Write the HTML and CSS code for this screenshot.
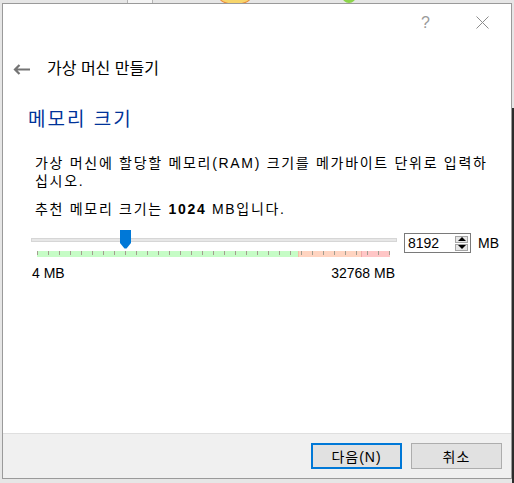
FILE: index.html
```html
<!DOCTYPE html>
<html>
<head>
    <title>가상 머신 만들기</title>
    <link rel="stylesheet" href="styles.css">
</head>
<body>

    <!-- bits of the desktop peeking out behind the dialog -->
    <div class="desktop">
        <span class="desk-item desk-box"></span>
        <span class="desk-item desk-sun"></span>
        <span class="desk-item desk-leaf"></span>
        <span class="desk-item desk-dark"></span>
    </div>

    <div class="window">
        <div class="titlebar">
            <span class="help">?</span>
            <svg class="close" width="13" height="13" viewBox="0 0 13 13">
                <path d="M0.5 0.5 L12.5 12.5 M12.5 0.5 L0.5 12.5" stroke="#8c8c8c" stroke-width="1" fill="none"/>
            </svg>
        </div>

        <div class="wizard-head">
            <svg class="back" width="17" height="11" viewBox="0 0 17 11">
                <path d="M17 5.5 H2 M6.5 1 L2 5.5 L6.5 10" stroke="#747474" stroke-width="2.2" fill="none"/>
            </svg>
            <span class="wizard-title">가상 머신 만들기</span>
        </div>

        <div class="page">
            <h2 class="page-title">메모리 크기</h2>
            <p class="desc">가상 머신에 할당할 메모리(RAM) 크기를 메가바이트 단위로 입력하<br>십시오.</p>
            <p class="desc desc-tight">추천 메모리 크기는 <b>1024</b> MB입니다.</p>

            <div class="mem-row">
                <div class="slider-wrap">
                    <div class="slider">
                        <div class="track"></div>
                        <svg class="thumb" width="11" height="19" viewBox="0 0 11 19">
                            <path d="M0 0 H11 V13 L6.5 18.5 H4.5 L0 13 Z" fill="#0078d7"/>
                        </svg>
                    </div>
                    <div class="scale">
                        <span class="zone zone-ok"></span>
                        <span class="zone zone-warn"></span>
                        <span class="zone zone-bad"></span>
                    </div>
                    <div class="scale-labels">
                        <span>4 MB</span>
                        <span>32768 MB</span>
                    </div>
                </div>

                <div class="spin">
                    <span class="spin-value">8192</span>
                    <div class="spin-buttons">
                        <span class="spin-btn"><i class="arrow-up"></i></span>
                        <span class="spin-btn"><i class="arrow-down"></i></span>
                    </div>
                </div>
                <span class="unit">MB</span>
            </div>
        </div>

        <div class="footer">
            <button class="btn btn-default">다음(N)</button>
            <button class="btn">취소</button>
        </div>
    </div>

</body>
</html>
```

FILE: styles.css
```css
body {
    margin: 0;
    padding: 0;
    width: 514px;
    height: 483px;
    overflow: hidden;
    position: relative;
    background-color: #e6e6e6;
    font-family: "Liberation Sans", "Noto Sans CJK KR", sans-serif;
    color: #000;
}

/* desktop remnants */
.desk-item {
    position: absolute;
    display: block;
}

.desk-box {
    left: 127px;
    top: -6px;
    width: 24px;
    height: 8px;
    border: 1px solid #b5b5b5;
    background-color: #f4f4f4;
}

.desk-sun {
    left: 218px;
    top: -14px;
    width: 32px;
    height: 17px;
    border-radius: 50%;
    background-color: #f7d56b;
    border: 1px solid #e8883a;
}

.desk-leaf {
    left: 342px;
    top: -8px;
    width: 14px;
    height: 11px;
    border-radius: 0 0 8px 8px;
    background-color: #8cd44a;
}

.desk-dark {
    right: 0;
    top: 108px;
    width: 2px;
    bottom: 0;
    background-color: #2c2c2c;
}

/* dialog */
.window {
    position: relative;
    box-sizing: border-box;
    margin: 3px 0 0 2px;
    width: 510px;
    height: 476px;
    border: 1px solid #9a9a9a;
    background-color: #ffffff;
    display: flex;
    flex-direction: column;
}

.titlebar {
    height: 36px;
    display: flex;
    justify-content: flex-end;
    align-items: flex-start;
    padding-right: 22px;
}

.help {
    margin-top: 11px;
    margin-right: 46px;
    font-size: 16px;
    line-height: 16px;
    color: #9a9a9a;
}

.close {
    margin-top: 12px;
}

.wizard-head {
    display: flex;
    align-items: center;
    height: 20px;
    margin-top: 19px;
    padding-left: 10px;
}

.back {
    margin-right: 17px;
}

.wizard-title {
    font-size: 16px;
    line-height: 20px;
}

.page {
    flex: 1;
    padding-left: 32px;
}

.page-title {
    margin: 29px 0 0 -7px;
    font-size: 19px;
    line-height: 24px;
    font-weight: normal;
    letter-spacing: 2px;
    color: #003399;
}

.desc {
    margin: 22px 0 0 0;
    font-size: 14px;
    line-height: 18px;
    letter-spacing: 1.7px;
}

.desc-tight {
    margin-top: 10px;
}

.desc b {
    font-weight: bold;
}

/* memory slider row */
.mem-row {
    display: flex;
    align-items: flex-start;
    margin-top: 12px;
    margin-left: -4px;
}

.slider-wrap {
    width: 366px;
}

.slider {
    position: relative;
    height: 18px;
}

.track {
    position: absolute;
    left: 0;
    right: 0;
    top: 8px;
    height: 4px;
    box-sizing: border-box;
    border: 1px solid #d6d6d6;
    background-color: #e7e7e7;
}

.thumb {
    position: absolute;
    left: 89px;
    top: 0;
}

.scale {
    position: relative;
    display: flex;
    height: 6px;
    margin: 3px 6px 0 6px;
}

.scale::after {
    content: "";
    position: absolute;
    left: 0;
    right: 0;
    top: 0;
    height: 4px;
    background: repeating-linear-gradient(to right, #a39d8f 0 1px, transparent 1px 11px);
}

.zone {
    display: block;
    height: 6px;
}

.zone-ok {
    width: 261px;
    background-color: #c6fcc6;
}

.zone-warn {
    width: 63px;
    background-color: #ffd4c0;
    border-left: 1px solid #f3c0a8;
    box-sizing: border-box;
}

.zone-bad {
    width: 29px;
    background-color: #ffc6c6;
    border-left: 1px solid #f0a9a9;
    box-sizing: border-box;
}

.scale-labels {
    display: flex;
    justify-content: space-between;
    margin-top: 8px;
    padding: 0 2px 0 1px;
    font-size: 14px;
    line-height: 16px;
}

.spin {
    box-sizing: border-box;
    width: 67px;
    height: 20px;
    margin: 3px 0 0 7px;
    border: 1px solid #7a7a7a;
    display: flex;
    align-items: center;
    justify-content: space-between;
    padding: 0 2px 0 3px;
}

.spin-value {
    font-size: 14px;
    line-height: 16px;
}

.spin-buttons {
    display: flex;
    flex-direction: column;
    gap: 1px;
}

.spin-btn {
    box-sizing: border-box;
    width: 13px;
    height: 7px;
    border: 1px solid #a6a6a6;
    background-color: #e6e6e6;
    display: flex;
    align-items: center;
    justify-content: center;
}

.arrow-up,
.arrow-down {
    width: 0;
    height: 0;
    border-left: 4px solid transparent;
    border-right: 4px solid transparent;
}

.arrow-up {
    border-bottom: 4px solid #000;
}

.arrow-down {
    border-top: 4px solid #000;
}

.unit {
    margin: 3px 0 0 7px;
    font-size: 14px;
    line-height: 20px;
}

/* footer buttons */
.footer {
    display: flex;
    justify-content: flex-end;
    gap: 9px;
    height: 45px;
    padding: 9px 9px 0 0;
    box-sizing: border-box;
    border-top: 1px solid #dfdfdf;
    background-color: #f0f0f0;
}

.btn {
    box-sizing: border-box;
    width: 91px;
    height: 26px;
    padding: 0;
    border: 1px solid #adadad;
    background-color: #e1e1e1;
    font-family: "Liberation Sans", "Noto Sans CJK KR", sans-serif;
    font-size: 14px;
    letter-spacing: 1px;
    color: #000;
}

.btn-default {
    border: 2px solid #0078d7;
}
```
